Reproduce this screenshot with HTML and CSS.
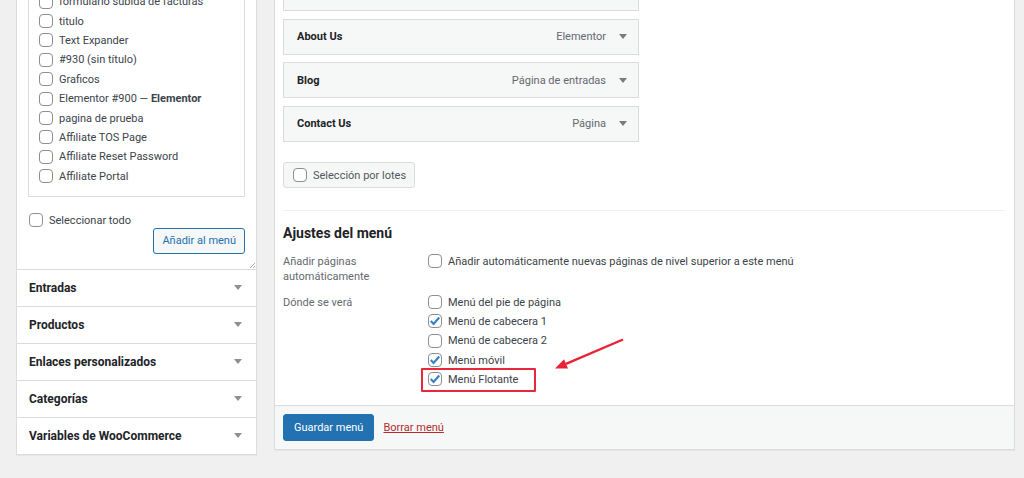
FILE: index.html
```html
<!DOCTYPE html>
<html lang="es">
<head>
<meta charset="UTF-8" />
<title>Menús</title>
<link rel="stylesheet" href="styles.css">
</head>
<body>
<div class="page">
  <aside class="side">
    <div class="pages-panel">
      <div class="list-box">
        <ul class="check-list">
          <li><span class="cb"></span><span>formulario subida de facturas</span></li>
          <li><span class="cb"></span><span>titulo</span></li>
          <li><span class="cb"></span><span>Text Expander</span></li>
          <li><span class="cb"></span><span>#930 (sin título)</span></li>
          <li><span class="cb"></span><span>Graficos</span></li>
          <li><span class="cb"></span><span>Elementor #900 — <b>Elementor</b></span></li>
          <li><span class="cb"></span><span>pagina de prueba</span></li>
          <li><span class="cb"></span><span>Affiliate TOS Page</span></li>
          <li><span class="cb"></span><span>Affiliate Reset Password</span></li>
          <li><span class="cb"></span><span>Affiliate Portal</span></li>
        </ul>
      </div>
      <div class="select-all"><span class="cb"></span><span>Seleccionar todo</span></div>
      <div class="add-row"><button class="btn-secondary">Añadir al menú</button></div>
      <svg class="grip" width="6" height="6" viewBox="0 0 6 6"><path d="M6 1 1 6M6 4 4 6" stroke="#a7aaad" stroke-width="1"/></svg>
    </div>
    <div class="acc-item"><h3>Entradas</h3><span class="caret"></span></div>
    <div class="acc-item"><h3>Productos</h3><span class="caret"></span></div>
    <div class="acc-item"><h3>Enlaces personalizados</h3><span class="caret"></span></div>
    <div class="acc-item"><h3>Categorías</h3><span class="caret"></span></div>
    <div class="acc-item"><h3>Variables de WooCommerce</h3><span class="caret"></span></div>
  </aside>

  <main class="menu-panel">
    <div class="menu-body">
      <ul class="menu-items">
        <li class="menu-item"><span class="item-title"></span><span class="caret dark"></span></li>
        <li class="menu-item"><span class="item-title">About Us</span><span class="item-type">Elementor</span><span class="caret dark"></span></li>
        <li class="menu-item"><span class="item-title">Blog</span><span class="item-type">Página de entradas</span><span class="caret dark"></span></li>
        <li class="menu-item"><span class="item-title">Contact Us</span><span class="item-type">Página</span><span class="caret dark"></span></li>
      </ul>
      <div class="bulk"><span class="cb"></span><span>Selección por lotes</span></div>

      <div class="settings">
        <h3>Ajustes del menú</h3>
        <div class="setting-row">
          <div class="setting-label">Añadir páginas<br>automáticamente</div>
          <ul class="options">
            <li><span class="cb"></span><span>Añadir automáticamente nuevas páginas de nivel superior a este menú</span></li>
          </ul>
        </div>
        <div class="setting-row">
          <div class="setting-label">Dónde se verá</div>
          <ul class="options locations">
            <li><span class="cb"></span><span>Menú del pie de página</span></li>
            <li><span class="cb checked"><svg width="12" height="12" viewBox="0 0 12 12"><path d="M1.8 6 4.6 8.9 10.2 2.6" fill="none" stroke="#3582c4" stroke-width="2.2"/></svg></span><span>Menú de cabecera 1</span></li>
            <li><span class="cb"></span><span>Menú de cabecera 2</span></li>
            <li><span class="cb checked"><svg width="12" height="12" viewBox="0 0 12 12"><path d="M1.8 6 4.6 8.9 10.2 2.6" fill="none" stroke="#3582c4" stroke-width="2.2"/></svg></span><span>Menú móvil</span></li>
            <li><span class="cb checked"><svg width="12" height="12" viewBox="0 0 12 12"><path d="M1.8 6 4.6 8.9 10.2 2.6" fill="none" stroke="#3582c4" stroke-width="2.2"/></svg></span><span>Menú Flotante</span><span class="highlight"></span></li>
          </ul>
          <!-- annotation arrow pointing at the highlighted option -->
          <svg class="arrow" width="78" height="40" viewBox="0 0 78 40">
            <path d="M73 4.5 16 28.8" stroke="#ea2236" stroke-width="2.4" fill="none"/>
            <polygon points="5,33.5 18,33.4 14.1,24.2" fill="#ea2236"/>
          </svg>
        </div>
      </div>
    </div>
    <div class="menu-footer">
      <button class="btn-primary">Guardar menú</button>
      <a class="delete" href="#">Borrar menú</a>
    </div>
  </main>
</div>
</body>
</html>
```

FILE: styles.css
```css
/* Base */
:root {
  --bg: #f0f0f1;
  --border: #dcdcde;
  --text: #3c434a;
  --heading: #1d2327;
  --muted: #646970;
  --blue: #2271b1;
  --soft: #f6f7f7;
}

*, *::before, *::after {
  box-sizing: border-box;
}

body {
  margin: 0;
  height: 478px;
  overflow: hidden;
  background: var(--bg);
  font-family: Roboto, "Liberation Sans", sans-serif;
  font-size: 11px;
  color: var(--text);
}

ul {
  list-style: none;
  margin: 0;
  padding: 0;
}

h3 {
  margin: 0;
}

/* Layout */
.page {
  display: flex;
  align-items: flex-start;
  gap: 17px;
  padding-left: 16px;
}

/* Checkbox look */
.cb {
  flex: 0 0 auto;
  width: 14px;
  height: 14px;
  border: 1px solid #8c8f94;
  border-radius: 4px;
  background: #fff;
  display: inline-flex;
  align-items: center;
  justify-content: center;
}

/* Left column */
.side {
  width: 241px;
  margin-top: -22px;
  background: #fff;
  border: 1px solid var(--border);
  box-shadow: 0 1px 1px rgba(0, 0, 0, 0.04);
}

.pages-panel {
  position: relative;
  padding: 10px 11px 15px;
  border-bottom: 1px solid var(--border);
}

.list-box {
  border: 1px solid var(--border);
  padding: 2px 0 10px 10px;
}

.check-list li {
  height: 19.4px;
  display: flex;
  align-items: center;
  gap: 6px;
  white-space: nowrap;
}

.check-list b {
  font-weight: 700;
}

.select-all {
  margin-top: 16px;
  height: 15px;
  display: flex;
  align-items: center;
  gap: 6px;
  padding-left: 1px;
}

.add-row {
  display: flex;
  justify-content: flex-end;
}

.btn-secondary {
  height: 26px;
  padding: 0 8px;
  border: 1px solid var(--blue);
  border-radius: 3px;
  background: var(--soft);
  color: var(--blue);
  font: inherit;
}

.grip {
  position: absolute;
  right: 1px;
  bottom: 1px;
}

.acc-item {
  height: 37px;
  padding: 0 14px 0 12px;
  border-bottom: 1px solid var(--border);
  display: flex;
  align-items: center;
  justify-content: space-between;
}
.acc-item:last-child {
  height: 36px;
  border-bottom: none;
}
.acc-item h3 {
  font-size: 12px;
  font-weight: 700;
  color: var(--heading);
}

.caret {
  width: 0;
  height: 0;
  border-left: 4px solid transparent;
  border-right: 4px solid transparent;
  border-top: 5px solid #8c8f94;
}
.caret.dark {
  border-top-color: #787c82;
}

/* Right column */
.menu-panel {
  flex: 0 0 741px;
  margin-top: -40px;
  background: #fff;
  border: 1px solid var(--border);
  box-shadow: 0 1px 1px rgba(0, 0, 0, 0.04);
}

.menu-body {
  padding: 14px 9px 16px 8px;
}

.menu-items {
  width: 356px;
}

.menu-item {
  height: 36px;
  margin-bottom: 7.5px;
  padding: 0 11px 0 13px;
  background: var(--soft);
  border: 1px solid var(--border);
  display: flex;
  align-items: center;
}
.menu-item:last-child {
  margin-bottom: 0;
}

.item-title {
  flex: 1;
  font-weight: 700;
  color: var(--heading);
}

.item-type {
  color: var(--muted);
  margin-right: 13px;
}

.bulk {
  margin-top: 20.5px;
  height: 26px;
  display: inline-flex;
  align-items: center;
  gap: 6px;
  padding: 0 8px 0 9px;
  background: var(--soft);
  border: 1px solid var(--border);
  border-radius: 3px;
  color: #50575e;
}

.settings {
  margin-top: 22px;
  border-top: 1px solid var(--bg);
}

.settings h3 {
  margin-top: 12px;
  font-size: 14px;
  line-height: 20px;
  font-weight: 700;
  color: var(--heading);
}

.setting-row {
  position: relative;
  display: flex;
  margin-top: 8.5px;
}
.setting-row + .setting-row {
  margin-top: 9px;
}

.setting-label {
  width: 145px;
  padding-top: 2px;
  line-height: 15px;
  color: var(--muted);
}
.setting-row:first-of-type .setting-label {
  height: 32px;
}

.options {
  position: relative;
}

.options li {
  position: relative;
  height: 19.3px;
  display: flex;
  align-items: center;
  gap: 6px;
}

/* Annotation overlay */
.highlight {
  position: absolute;
  left: -7px;
  top: -2px;
  width: 115px;
  height: 24px;
  border: 2px solid #e8283a;
  border-radius: 1px;
}

.arrow {
  position: absolute;
  left: 267px;
  top: 42px;
}

/* Footer */
.menu-footer {
  padding: 8px 8px;
  background: var(--soft);
  border-top: 1px solid var(--border);
  display: flex;
  align-items: center;
  gap: 9px;
}

.btn-primary {
  height: 27px;
  padding: 0 10px;
  border: 1px solid var(--blue);
  border-radius: 3px;
  background: var(--blue);
  color: #fff;
  font: inherit;
}

.delete {
  color: #b32d2e;
  text-decoration: underline;
}
```
